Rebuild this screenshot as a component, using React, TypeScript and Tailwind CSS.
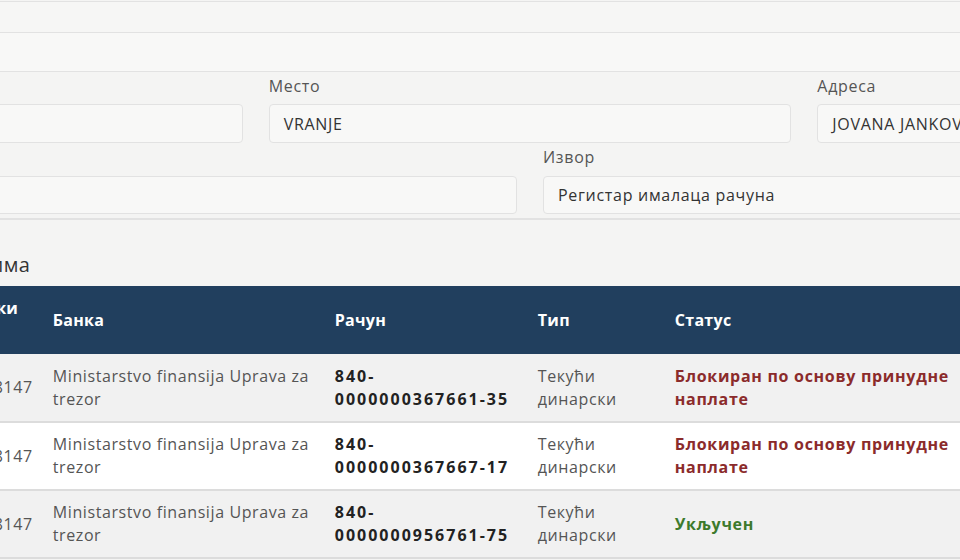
import React from "react";

const rows = [
  {
    id: "100898147",
    bank: "Ministarstvo finansija Uprava za trezor",
    account: ["840-", "0000000367661-35"],
    status: "Блокиран по основу принудне наплате",
    blocked: true,
    bg: "bg-[#f1f1f1]",
  },
  {
    id: "100898147",
    bank: "Ministarstvo finansija Uprava za trezor",
    account: ["840-", "0000000367667-17"],
    status: "Блокиран по основу принудне наплате",
    blocked: true,
    bg: "bg-white",
  },
  {
    id: "100898147",
    bank: "Ministarstvo finansija Uprava za trezor",
    account: ["840-", "0000000956761-75"],
    status: "Укључен",
    blocked: false,
    bg: "bg-[#f1f1f1]",
  },
];

function Field({ label, value, height, gap }: { label: string; value?: string; height: string; gap: string }) {
  return (
    <div className="flex flex-col">
      <label className={`text-[16px] leading-[20px] tracking-[0.7px] text-[#555] ${gap}`}>{label}</label>
      <div
        className={`${height} rounded-[4px] border border-[#e2e2e2] bg-[#f8f8f7] px-[14px] flex items-center text-[16px] tracking-[0.7px] text-[#333] whitespace-nowrap overflow-hidden`}
      >
        {value}
      </div>
    </div>
  );
}

export default function App() {
  return (
    <div className="w-[960px] h-[560px] overflow-hidden bg-[#f4f4f3] font-['Open_Sans',sans-serif]">
      <div className="ml-[-280px] w-[1620px]">
        {/* Горња поља (одсечена) */}
        <div className="mt-[1px] h-[32px] border border-[#e2e2e2] bg-[#f6f6f5]" />
        <div className="h-[39px] border-x border-b border-[#e2e2e2] bg-[#f8f8f7]" />

        {/* Ред 1 */}
        <div className="mt-[4px] grid grid-cols-3 gap-x-[26px]">
          <Field label="Општина" value="" height="h-[39px]" gap="mb-[8px]" />
          <Field label="Место" value="VRANJE" height="h-[39px]" gap="mb-[8px]" />
          <Field label="Адреса" value="JOVANA JANKOVIĆA LAPTOPA" height="h-[39px]" gap="mb-[8px]" />
        </div>

        {/* Ред 2 */}
        <div className="mt-[4px] grid grid-cols-2 gap-x-[26px]">
          <Field label="Датум" value="" height="h-[38px]" gap="mb-[9px]" />
          <Field label="Извор" value="Регистар ималаца рачуна" height="h-[38px]" gap="mb-[9px]" />
        </div>

        <div className="mt-[4px] h-[2px] bg-[#e2e2e2]" />

        {/* Наслов */}
        <h2 className="mt-[31px] mb-[7px] ml-[110px] text-[20px] leading-[28px] tracking-[0.4px] text-[#333] font-normal">
          Подаци о рачунима
        </h2>

        {/* Табела */}
        <table className="ml-[215px] table-fixed border-collapse text-left">
          <colgroup>
            <col className="w-[107px]" />
            <col className="w-[282px]" />
            <col className="w-[203px]" />
            <col className="w-[137px]" />
            <col className="w-[300px]" />
          </colgroup>
          <thead className="bg-[#213f5e] text-white">
            <tr className="h-[68px]">
              <th className="px-[10px] text-[16px] leading-[23px] tracking-[0.3px] font-bold">Порески број</th>
              <th className="px-[10px] text-[16px] leading-[23px] tracking-[0.3px] font-bold">Банка</th>
              <th className="px-[10px] text-[16px] leading-[23px] tracking-[0.3px] font-bold">Рачун</th>
              <th className="px-[10px] text-[16px] leading-[23px] tracking-[0.3px] font-bold">Тип</th>
              <th className="px-[10px] text-[16px] leading-[23px] tracking-[0.3px] font-bold">Статус</th>
            </tr>
          </thead>
          <tbody>
            {rows.map((r, i) => (
              <tr key={i} className={`h-[68px] border-b-2 border-[#dcdcdc] ${r.bg}`}>
                <td className="px-[10px] text-[16px] leading-[23px] tracking-[0.6px] text-[#555] whitespace-nowrap">
                  {r.id}
                </td>
                <td className="px-[10px] text-[16px] leading-[23px] tracking-[0.6px] text-[#555]">{r.bank}</td>
                <td className="px-[10px] text-[16px] leading-[23px] text-[#222] font-bold tracking-[2px]">
                  <div>{r.account[0]}</div>
                  <div>{r.account[1]}</div>
                </td>
                <td className="px-[10px] text-[16px] leading-[23px] tracking-[0.6px] text-[#555]">
                  <div>Текући</div>
                  <div>динарски</div>
                </td>
                <td
                  className={`px-[10px] text-[16px] leading-[23px] font-bold tracking-[0.7px] ${
                    r.blocked ? "text-[#8b2b2b]" : "text-[#3d7a2c]"
                  }`}
                >
                  {r.status}
                </td>
              </tr>
            ))}
          </tbody>
        </table>
      </div>
    </div>
  );
}
